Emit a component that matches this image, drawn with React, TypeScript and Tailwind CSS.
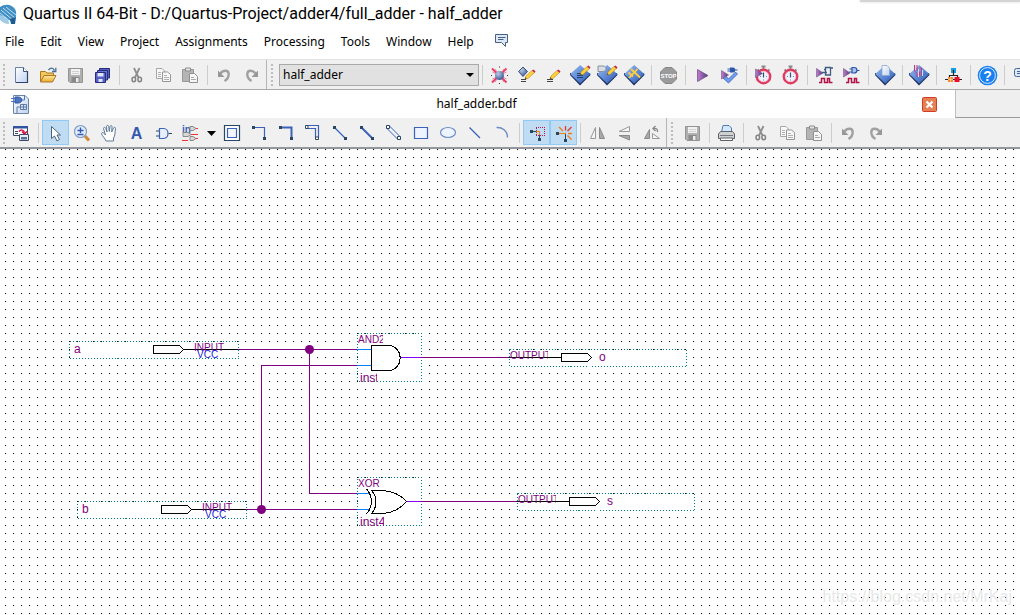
import type { ReactNode } from "react";

const NAVY = "#2a4762";
const BLUE = "#3b62b8";

function Svg({ children }: { children: ReactNode }) {
  return (
    <svg width="21" height="21" viewBox="0 0 21 21" className="block shrink-0" fill="none" aria-hidden="true">
      {children}
    </svg>
  );
}

function Defs() {
  return (
    <svg width="0" height="0" className="absolute" aria-hidden="true">
      <defs>
        <linearGradient id="chip" x1="0" y1="0" x2="1" y2="1">
          <stop offset="0" stopColor="#9dbdf0" />
          <stop offset="0.5" stopColor="#5f8bd8" />
          <stop offset="1" stopColor="#2c56ad" />
        </linearGradient>
        <linearGradient id="paper" x1="0" y1="0" x2="1" y2="1">
          <stop offset="0" stopColor="#ffffff" />
          <stop offset="1" stopColor="#bfd3f2" />
        </linearGradient>
        <linearGradient id="play" x1="0" y1="0" x2="1" y2="0">
          <stop offset="0" stopColor="#c77bd0" />
          <stop offset="1" stopColor="#4a3a78" />
        </linearGradient>
        <radialGradient id="ball" cx="0.35" cy="0.3" r="0.8">
          <stop offset="0" stopColor="#b9cbe6" />
          <stop offset="1" stopColor="#31508f" />
        </radialGradient>
        <linearGradient id="folder" x1="0" y1="0" x2="0" y2="1">
          <stop offset="0" stopColor="#ffe9a0" />
          <stop offset="1" stopColor="#e9a92c" />
        </linearGradient>
      </defs>
    </svg>
  );
}

function Chip() {
  return (
    <>
      <path d="M0 10 L10 20.500 L20.500 10 L20 8 L0 8z" fill="#1c3263" />
      <path d="M10.200 0 L20.300 9 L10.200 18.500 L0.200 9z" fill="url(#chip)" />
    </>
  );
}

function Pencil({ x = 0, y = 0 }: { x?: number; y?: number }) {
  return (
    <g transform={`translate(${x} ${y})`}>
      <path d="M0 9 L1 6 L7 0.500 L9.500 2.500 L3 8.500z" fill="#ffd23a" stroke="#b98518" strokeWidth="0.6" />
      <path d="M7 0.500 L8.500 -0.500 L10.500 1.500 L9.500 2.700z" fill="#c22050" />
      <path d="M0 9 L0.600 7.200 L1.800 8.400z" fill="#333" />
    </g>
  );
}

function Clock() {
  return (
    <>
      <path d="M8.500 1.500 H12.500 M10.500 2 V5 M15 4.500 L16.500 6 M6 4.500 L4.500 6" stroke="#888" strokeWidth="1.8" />
      <circle cx="10.500" cy="11.500" r="6.700" fill="#eef3ff" stroke="#de3a60" strokeWidth="2.4" />
      <circle cx="10.500" cy="11.500" r="5.200" stroke="#f7b8c6" strokeWidth="0.8" />
      <path d="M10.500 7.500 V12.500" stroke="#3a5070" strokeWidth="1.2" />
      <path d="M7 11.500 H8 M13 11.500 H14 M10 15 H11" stroke="#7088b0" />
    </>
  );
}

const newIcon = (
  <Svg>
    <path d="M4.500 2.500 H12.500 L16.500 6.500 V17.500 H4.500z" fill="url(#paper)" stroke="#6c84a8" />
    <path d="M16.500 6 V17.500 H5" stroke="#2e4468" strokeWidth="1.2" />
    <path d="M12.500 2.500 V6.500 H16.500" fill="#fff" stroke="#3f567c" />
  </Svg>
);
const openIcon = (
  <Svg>
    <path d="M2.500 16.500 V6.500 H7.500 L9 8 H15.500 V11" fill="#f3c65a" stroke="#a9792a" />
    <path d="M2.500 17 L6 10.500 H18 L14.500 17z" fill="url(#folder)" stroke="#a9792a" />
    <path d="M10.500 5 C12.500 2.500 15 2.500 16.500 5.500 M17.800 2.800 V6.500 H14" stroke="#4a7098" strokeWidth="1.300" />
  </Svg>
);
const saveIcon = (
  <Svg>
    <path d="M3.500 3.500 H17.500 V17.500 H5 L3.500 16z" fill="#b0b0b0" stroke="#939393" />
    <path d="M6 4 H15 V10 H6z" fill="#f2f2f2" />
    <path d="M7 6.500 H14 M7 8.500 H14" stroke="#d0d0d0" />
    <path d="M6.500 12 H14.500 V17 H6.500z" fill="#8a8a8a" />
    <path d="M11 13 H13.500 V17 H11z" fill="#ededed" />
  </Svg>
);
const saveAllIcon = (
  <Svg>
    <path d="M7.500 3.500 H17.500 V13 H7.500z" fill="#5560c4" stroke="#262c78" />
    <path d="M5.500 5.500 H15.500 V15 H5.500z" fill="#6a76d6" stroke="#262c78" />
    <path d="M3.500 7.500 H13.500 V17.500 H3.500z" fill="#5560c4" stroke="#262c78" />
    <path d="M5.500 8 H11.500 V11.500 H5.500z M6.500 14 H10.500 V17 H6.500z" fill="#dfe4ff" />
  </Svg>
);
const cutIcon = (
  <Svg>
    <path d="M8 3 L12.500 12.500 M13.500 3 L9 12.500" stroke="#8f8f8f" strokeWidth="1.800" />
    <ellipse cx="7.800" cy="14.500" rx="1.800" ry="2.200" stroke="#848484" strokeWidth="1.500" />
    <ellipse cx="13.700" cy="14.500" rx="1.800" ry="2.200" stroke="#848484" strokeWidth="1.500" />
  </Svg>
);
const copyIcon = (
  <Svg>
    <path d="M3.500 3.500 H9 L11.500 6 V13.500 H3.500z" fill="#f8f8f8" stroke="#a6a6a6" />
    <path d="M9.500 7 H14.500 L17.500 9.500 V16.500 H9.500z" fill="#f8f8f8" stroke="#969696" />
    <path d="M5 7.500 H8 M5 9.500 H8 M5 11.500 H8 M11 10.500 H14 M11 12.500 H16 M11 14.500 H16" stroke="#b0b0b0" />
  </Svg>
);
const pasteIcon = (
  <Svg>
    <path d="M2.500 4.500 H13.500 V16.500 H2.500z" fill="#b4b4b4" stroke="#989898" />
    <path d="M5.500 3 H10.500 V6 H5.500z" fill="#e4e4e4" stroke="#8c8c8c" />
    <path d="M9.500 8.500 H14.500 L17.500 11.500 V17.500 H9.500z" fill="#f6f6f6" stroke="#909090" />
    <path d="M11 12.500 H14 M11 14.500 H16" stroke="#aaa" />
  </Svg>
);
const undoIcon = (
  <Svg>
    <path d="M6.500 8.500 C9 5 14.500 4.500 14.700 9 C14.800 12 13 14.500 10.500 16" stroke="#a0a0a0" strokeWidth="2.400" />
    <path d="M4 5.500 V12 H10.500z" fill="#989898" />
  </Svg>
);
const redoIcon = (
  <Svg>
    <path d="M14.500 8.500 C12 5 6.500 4.500 6.300 9 C6.200 12 8 14.500 10.500 16" stroke="#a0a0a0" strokeWidth="2.400" />
    <path d="M17 5.500 V12 H10.500z" fill="#989898" />
  </Svg>
);
const settingsIcon = (
  <Svg>
    <path d="M3 3.500 L17.500 17.500 M17.500 3.500 L3 17.500" stroke="#ec3a66" strokeWidth="1.800" />
    <path d="M6 4 L15 17 M15 4 L6 17 M3.500 7 L17.500 14 M17.500 7 L3.500 14" stroke="#f0668a" strokeWidth="0.800" />
    <path d="M10 2 H11 M10 18.500 H11 M2 10.500 H3 M18 10.500 H19" stroke="#333" />
    <circle cx="10.500" cy="10.500" r="4.500" fill="url(#ball)" />
  </Svg>
);
const assignIcon = (
  <Svg>
    <path d="M7 2 L11.500 6.500 L7 11.500 L2.500 6.500z" fill="url(#ball)" stroke="#3b5480" />
    <Pencil x={9} y={5} />
    <path d="M5 14.500 H10 M5 16.500 H10" stroke="#444" />
  </Svg>
);
const editAssignIcon = (
  <Svg>
    <Pencil x={7} y={5} />
    <path d="M4 14.500 H10 M4 16.500 H10" stroke="#444" />
  </Svg>
);
const chipEditIcon = (
  <Svg>
    <Chip />
    <path d="M7 8.500 H13 M7 10.500 H13 M7 12.500 H13" stroke="#24406e" />
    <Pencil x={10} y={1} />
  </Svg>
);
const chipPinIcon = (
  <Svg>
    <Chip />
    <path d="M1 1 H6 C10 1 10 6.500 6 6.500 H1z" fill="#d8dce4" stroke="#8a919c" />
    <Pencil x={10} y={1} />
  </Svg>
);
const chipPlanIcon = (
  <Svg>
    <Chip />
    <path d="M7 4 L16 12.500 M13.500 4 L5 13 M4.500 7.500 L9 11.500" stroke="#ffcf3c" strokeWidth="1.800" />
  </Svg>
);
const stopIcon = (
  <Svg>
    <path d="M7 2.500 H14 L18.500 7 V14 L14 18.500 H7 L2.500 14 V7z" fill="#9b9b9b" stroke="#878787" />
    <text x="10.500" y="13" textAnchor="middle" fontSize="6" fontWeight="700" fontFamily="Liberation Sans, sans-serif" fill="#fff">
      STOP
    </text>
  </Svg>
);
const playIcon = (
  <Svg>
    <path d="M5.500 4.500 L16 10.500 L5.500 16.500z" fill="url(#play)" stroke="#6e5685" strokeWidth="0.800" />
  </Svg>
);
const analyzeIcon = (
  <Svg>
    <path d="M4 13 L7 11 L9.500 14 L16.500 7 L18.500 9 L9.500 18z" fill="#6f9df0" stroke="#3b62b8" strokeWidth="0.800" />
    <path d="M2.500 5.500 L9.500 10 L2.500 14z" fill="url(#play)" stroke="#6e5685" strokeWidth="0.600" />
    <path d="M11 2.500 H14 C17 2.500 17 7.500 14 7.500 H11z" fill="#2d57ae" />
    <path d="M8.500 4 H11 M8.500 6 H11 M16 5 H18.500" stroke="#2d57ae" />
  </Svg>
);
const timingRunIcon = (
  <Svg>
    <Clock />
    <path d="M2.500 4 L9.500 8.500 L2.500 12.500z" fill="url(#play)" stroke="#6e5685" strokeWidth="0.600" />
  </Svg>
);
const timingIcon = (
  <Svg>
    <Clock />
  </Svg>
);
const wave = "M5 17.500 H7.500 V13.500 H10.500 V17.500 H13.500 V13.500 H15.500 V17.500 H18.500";
const rtlSimIcon = (
  <Svg>
    <path d="M2.500 3.500 L9 8 L2.500 12z" fill="url(#play)" stroke="#6e5685" strokeWidth="0.600" />
    <path d="M11.500 2.500 H16.500 V10 H11.500z M8 7.500 H13 M10 4.500 H11.500 M16.500 3 H19" fill="none" stroke="#3f5d84" strokeWidth="1.300" />
    <path d={wave} stroke="#b01246" strokeWidth="1.500" />
  </Svg>
);
const gateSimIcon = (
  <Svg>
    <path d="M2.500 3.500 L9 8 L2.500 12z" fill="url(#play)" stroke="#6e5685" strokeWidth="0.600" />
    <path d="M11 2.500 H13 C17 2.500 17 8 13 8 H11z" fill="#a9c4f2" stroke="#2e55a8" strokeWidth="1.200" />
    <path d="M8.500 4 H11 M8 7 H11 M16 5.500 H18.500" stroke="#2e55a8" />
    <path d={wave} stroke="#b01246" strokeWidth="1.500" />
  </Svg>
);
const compileReportIcon = (
  <Svg>
    <Chip />
    <path d="M7 0.500 H12 L14.500 3 V10.500 H7z" fill="url(#paper)" stroke="#8fa5cc" strokeWidth="0.800" />
  </Svg>
);
const programmerIcon = (
  <Svg>
    <Chip />
    <path d="M5.500 0 V6 L8 8.500 V12 M8 0 V5 L10.500 7 V11 M10.500 3 H12.500 V11" stroke="#c23b7a" />
    <path d="M6.500 0 V5 M9.500 4 V12 M13.500 5 V11" stroke="#d6def5" />
  </Svg>
);
const qsysIcon = (
  <Svg>
    <path d="M8 3 H13 V8 H8z" fill="#14a0e8" />
    <path d="M10.500 5 V10.500 M6.500 13 V10.500 H14.500 V13 M2 14.500 H19" stroke="#222" strokeWidth="1.200" />
    <path d="M5 12 H10 V17 H5z" fill="#f58a2c" />
    <path d="M11.500 12 H16.500 V17 H11.500z" fill="#e8102c" />
    <path d="M7.500 12 V17 M5 14.500 H10" stroke="#ffd9a8" strokeWidth="0.700" />
  </Svg>
);
const helpIcon = (
  <Svg>
    <circle cx="10.500" cy="10.500" r="9.800" fill="#1a80f0" />
    <circle cx="10.500" cy="10.500" r="7.900" stroke="#d8eaff" />
    <text x="10.500" y="15.500" textAnchor="middle" fontSize="14" fontWeight="700" fontFamily="Liberation Sans, sans-serif" fill="#fff">
      ?
    </text>
  </Svg>
);
const messagesIcon = (
  <Svg>
    <rect x="3.500" y="3.500" width="15" height="8" rx="2" fill="#dce8fa" stroke="#4a6590" />
    <path d="M6 6.500 H16 M6 8.500 H16" stroke="#4a6590" />
  </Svg>
);

const detachIcon = (
  <Svg>
    <path d="M2.500 3.500 H16.500 V12.500 H2.500z" fill="#fff" stroke="#3a4a68" />
    <path d="M2 3 H17 V5.500 H2z" fill="#3154a0" />
    <path d="M4 8.500 H7 M4 10.500 H7" stroke="#3a4a68" />
    <path d="M8.500 11.500 H17.500 V17.500 H8.500z" fill="#e8eef8" stroke="#3a4a68" />
    <path d="M10 14 H16 V16.500 H10z" fill="#56709a" />
    <path d="M8 8.500 C9.500 6.500 13 6.500 13.500 9.500 M11 8.500 L13.500 11 L16 8.500" stroke="#d01246" strokeWidth="1.500" />
  </Svg>
);
const pointerIcon = (
  <Svg>
    <path d="M6.500 3.500 V15.500 L9.500 13 L12 18 L14.500 16.500 L12 12 H15.500z" fill="#fff" stroke="#4a6283" />
  </Svg>
);
const zoomIcon = (
  <Svg>
    <path d="M13 13 L17 17.500" stroke="#d28a3c" strokeWidth="3.200" />
    <circle cx="8.500" cy="8.500" r="6" fill="#e3eefc" stroke="#7f9cc4" strokeWidth="1.200" />
    <path d="M8.500 4.500 V10 M5.500 7.500 H11.500 M5.500 11.500 H11.500" stroke="#2c58b8" strokeWidth="1.400" />
  </Svg>
);
const handIcon = (
  <Svg>
    <path
      d="M7 18 C6 15 3 13 2.500 10.500 C3 9 5 9.500 6.500 12 L4.500 5.500 C4.500 4 6.300 4 6.800 5.500 L8 9 L7.500 3.500 C7.700 2 9.500 2 9.700 3.500 L10.300 8.500 L11 3.500 C11.500 2 13 2.300 13 3.800 L12.700 9 L14.500 5 C15.200 3.700 16.800 4.300 16.500 5.700 C15.700 9 16.500 13 14.500 15 V18z"
      fill="#fff"
      stroke="#5c7898"
    />
  </Svg>
);
const gateIcon = (
  <Svg>
    <path d="M6.500 5.500 H10.500 C16.500 5.500 16.500 15.500 10.500 15.500 H6.500z" fill="#e8f0ff" stroke={BLUE} strokeWidth="1.200" />
    <path d="M3 8 H6 M3 13 H6 M15.500 10.500 H19" stroke={NAVY} />
  </Svg>
);
const pinIcon = (
  <Svg>
    <text x="2" y="10" fontSize="10" fontWeight="700" fontFamily="Liberation Sans, sans-serif" fill="#3b62b8">
      in
    </text>
    <path d="M10 3.500 H13 L16 5.500 L13 7.500 H10z" fill="#d8d8d8" stroke="#8a8a8a" />
    <path d="M3 9.500 H8 L11 11.500 L8 13.500 H3z M10 13.500 H13 L16 15.500 L13 17.500 H10z" fill="#d8d8d8" stroke="#8a8a8a" />
    <path d="M16 5.500 H18 M11 11.500 H18 M16 15.500 H18 M2 17.500 H8" stroke="#e33" />
  </Svg>
);
const blockIcon = (
  <Svg>
    <path d="M2.500 2.500 H17.500 V17.500 H2.500z" fill="#fff" stroke={NAVY} strokeWidth="1.200" />
    <path d="M5.500 5.500 H14.500 V14.500 H5.500z" fill="#f2f6ff" stroke={BLUE} strokeWidth="1.200" />
  </Svg>
);
const nodeIcon = (
  <Svg>
    <path d="M4.500 4.500 H15.500 V15.500" stroke={BLUE} strokeWidth="1.200" />
    <path d="M3 3 H6 V6 H3z M14 14 H17 V17 H14z" fill={NAVY} />
  </Svg>
);
const busIcon = (
  <Svg>
    <path d="M4.500 4.500 H15.500 V15.500" stroke={BLUE} strokeWidth="2" />
    <path d="M3 3 H6 V6 H3z M14 14 H17 V17 H14z" fill={NAVY} />
  </Svg>
);
const conduitIcon = (
  <Svg>
    <path d="M5 2.500 H15.500 V14 M5 5.500 H12.500 V14" stroke={BLUE} strokeWidth="1.200" />
    <path d="M2.500 2.500 H5 V5.500 H2.500z M12.500 14 H15.500 V16.500 H12.500z" fill="#fff" stroke={NAVY} />
  </Svg>
);
const diagNodeIcon = (
  <Svg>
    <path d="M4.500 4.500 L15.500 15.500" stroke={BLUE} strokeWidth="1.200" />
    <path d="M3 3 H6 V6 H3z M14 14 H17 V17 H14z" fill={NAVY} />
  </Svg>
);
const diagBusIcon = (
  <Svg>
    <path d="M4.500 4.500 L15.500 15.500" stroke={BLUE} strokeWidth="2" />
    <path d="M3 3 H6 V6 H3z M14 14 H17 V17 H14z" fill={NAVY} />
  </Svg>
);
const diagConduitIcon = (
  <Svg>
    <path d="M5.500 3 L16 13.500 M3 5.500 L13.500 16" stroke={BLUE} />
    <path d="M2.500 2.500 H5.500 V5.500 H2.500z M13.500 13.500 H16.500 V16.500 H13.500z" fill="#fff" stroke={NAVY} />
  </Svg>
);
const rectIcon = (
  <Svg>
    <path d="M3.500 4.500 H16.500 V15.500 H3.500z" fill="#edf3ff" stroke={BLUE} strokeWidth="1.200" />
  </Svg>
);
const ellipseIcon = (
  <Svg>
    <ellipse cx="10" cy="9.500" rx="7.500" ry="5" fill="#edf3ff" stroke="#6b8ac6" strokeWidth="1.200" />
  </Svg>
);
const lineIcon = (
  <Svg>
    <path d="M4.500 4.500 L15 15" stroke={BLUE} strokeWidth="1.200" />
  </Svg>
);
const arcIcon = (
  <Svg>
    <path d="M4.500 4.500 C10 4 15.500 7.500 15.500 14.500" stroke="#6b8ac6" strokeWidth="1.400" />
  </Svg>
);
const rubberIcon = (
  <Svg>
    <path d="M10 4.500 H18.500 V12.500 H10 V4.500" stroke="#b01860" strokeDasharray="1 1" shapeRendering="crispEdges" />
    <path d="M7 8.500 H10" stroke={NAVY} />
    <path d="M10 8.500 H13.500 V12" stroke="#e68a1e" strokeWidth="1.200" />
    <path d="M13.500 12 V15" stroke={NAVY} />
    <path d="M4 7 H7 V10 H4z M12 15 H15 V18 H12z" fill={NAVY} />
  </Svg>
);
const partialIcon = (
  <Svg>
    <path d="M12.500 11 V17" stroke={NAVY} />
    <path d="M6 10.500 H13" stroke="#e68a1e" strokeWidth="1.200" />
    <path d="M3 9 H6 V12 H3z M11 16 H14 V19 H11z" fill={NAVY} />
    <path d="M6 4 L10 8 M14.500 12.500 L18.500 16.500 M15 10.500 H19" stroke="#ee7d18" strokeWidth="1.400" />
    <path d="M12.500 3 V7.500 M18.500 4 L14.500 8" stroke="#e03a2a" strokeWidth="1.300" />
  </Svg>
);
const flipHIcon = (
  <Svg>
    <path d="M8.500 4.500 V15.500 H3.500z" fill="#f6f6f6" stroke="#999" />
    <path d="M12.500 4.500 V15.500 H17.500z" fill="#a9a9a9" stroke="#8a8a8a" />
  </Svg>
);
const flipVIcon = (
  <Svg>
    <path d="M5 8.500 H15.500 V3.500z" fill="#f6f6f6" stroke="#999" />
    <path d="M5 12.500 H15.500 V17z" fill="#a9a9a9" stroke="#8a8a8a" />
  </Svg>
);
const rotateIcon = (
  <Svg>
    <path d="M8.500 6.500 V15.500 H3.500z" fill="#a9a9a9" stroke="#8a8a8a" />
    <path d="M11.500 10.500 V15.500 H18.500z" fill="#f6f6f6" stroke="#999" />
    <path d="M16.500 9 C17 6 15 5 12.500 5.500 M14.500 3 L12 5.500 L14.500 8" stroke="#888" strokeWidth="1.400" />
  </Svg>
);
const printIcon = (
  <Svg>
    <path d="M5.500 9 L7 2.500 H13 L15.500 5 V9" fill="#d4e8ff" stroke="#4e7fb0" />
    <path d="M4.500 8.500 H16.500 L18.500 11 V15.500 H2.500 V11z" fill="#cfd0d2" stroke="#5e6166" />
    <path d="M4.500 15 H16.500 V17.500 H4.500z" fill="#fff" stroke="#5e6166" />
    <path d="M4 12.500 H17" stroke="#75797f" />
  </Svg>
);

type Item = [label: string, icon: ReactNode, active?: boolean] | "|";

const fileTools: Item[] = [
  ["New", newIcon],
  ["Open", openIcon],
  ["Save", saveIcon],
  ["Save All", saveAllIcon],
  "|",
  ["Cut", cutIcon],
  ["Copy", copyIcon],
  ["Paste", pasteIcon],
  "|",
  ["Undo", undoIcon],
  ["Redo", redoIcon],
];

const projectTools: Item[] = [
  "|",
  ["Settings", settingsIcon],
  ["Assignment Editor", assignIcon],
  ["Edit Assignments", editAssignIcon],
  ["Pin Planner", chipEditIcon],
  ["Design Partition Planner", chipPinIcon],
  ["Chip Planner", chipPlanIcon],
  "|",
  ["Stop Processing", stopIcon],
  "|",
  ["Start Compilation", playIcon],
  ["Start Analysis & Synthesis", analyzeIcon],
  "|",
  ["Start TimeQuest", timingRunIcon],
  ["TimeQuest Timing Analyzer", timingIcon],
  "|",
  ["RTL Simulation", rtlSimIcon],
  ["Gate Level Simulation", gateSimIcon],
  "|",
  ["Compilation Report", compileReportIcon],
  "|",
  ["Programmer", programmerIcon],
  "|",
  ["Qsys", qsysIcon],
  "|",
  ["Help", helpIcon],
  "|",
  ["Messages", messagesIcon],
];

const drawTools: Item[] = [
  ["Rectangle Block", blockIcon],
  ["Orthogonal Node", nodeIcon],
  ["Orthogonal Bus", busIcon],
  ["Orthogonal Conduit", conduitIcon],
  ["Diagonal Node", diagNodeIcon],
  ["Diagonal Bus", diagBusIcon],
  ["Diagonal Conduit", diagConduitIcon],
  ["Rectangle", rectIcon],
  ["Oval", ellipseIcon],
  ["Line", lineIcon],
  ["Arc", arcIcon],
  "|",
  ["Rubberbanding", rubberIcon, true],
  ["Partial Line Selection", partialIcon, true],
  "|",
  ["Flip Horizontal", flipHIcon],
  ["Flip Vertical", flipVIcon],
  ["Rotate Left 90", rotateIcon],
];

const selectTools: Item[] = [
  ["Detach Window", detachIcon],
  "|",
  ["Selection Tool", pointerIcon, true],
  ["Zoom Tool", zoomIcon],
  ["Hand Tool", handIcon],
  ["Text Tool", <span className="font-['Liberation_Sans',sans-serif] text-base font-bold text-[#3358b0]">A</span>],
  ["Symbol Tool", gateIcon],
  ["Pin Tool", pinIcon],
];

const editTools: Item[] = [
  ["Save", saveIcon],
  "|",
  ["Print", printIcon],
  "|",
  ["Cut", cutIcon],
  ["Copy", copyIcon],
  ["Paste", pasteIcon],
  "|",
  ["Undo", undoIcon],
  ["Redo", redoIcon],
];

function Tools({ items }: { items: Item[] }) {
  return (
    <div className="flex shrink-0 items-center">
      {items.map((item, i) =>
        item === "|" ? (
          <span key={i} className="flex w-[7px] shrink-0 justify-center">
            <span className="h-5 w-px bg-[#cdcdcd]" />
          </span>
        ) : (
          <button
            key={i}
            type="button"
            aria-label={item[0]}
            className={
              item[2]
                ? "flex h-[25px] w-[27px] shrink-0 items-center justify-center border border-[#90c8f6] bg-[#c0dcf3] pt-0.5"
                : "flex h-[25px] w-[27px] shrink-0 items-center justify-center pt-0.5"
            }
          >
            {item[1]}
          </button>
        )
      )}
    </div>
  );
}

function Grip() {
  return <span className="mx-[3px] h-[22px] w-0 shrink-0 border-l-2 border-dotted border-[#bdbdbd]" />;
}

const menus = ["File", "Edit", "View", "Project", "Assignments", "Processing", "Tools", "Window", "Help"];

function Frame({ w, h }: { w: number; h: number }) {
  return <rect x="0.5" y="0.5" width={w} height={h} fill="#fff" stroke="#008080" strokeDasharray="1 2" />;
}

const PLUM = "#800080";

function InputPin({ x, y, name }: { x: number; y: number; name: string }) {
  return (
    <g transform={`translate(${x} ${y})`}>
      <Frame w={169} h={17} />
      <path d="M84.500 4.500 H110.500 L114.500 8.500 L110.500 12.500 H84.500z M114 8.500 H169" fill="none" stroke="#000" />
      <text x="5" y="12" fontSize="12" fill={PLUM}>{name}</text>
      <text x="125" y="10" fontSize="10" fill={PLUM}>INPUT</text>
      <text x="128" y="17" fontSize="10" fill="#2020e0">VCC</text>
    </g>
  );
}

function OutputPin({ x, y, name }: { x: number; y: number; name: string }) {
  return (
    <g transform={`translate(${x} ${y})`}>
      <Frame w={177} h={17} />
      <path d="M0 8.500 H52 M52.500 4.500 H78.500 L82.500 8.500 L78.500 12.500 H52.500z" fill="none" stroke="#000" />
      <svg x="1" y="0" width="38" height="14">
        <text x="0" y="10" fontSize="10" fill={PLUM}>OUTPUT</text>
      </svg>
      <text x="90" y="12" fontSize="12" fill={PLUM}>{name}</text>
    </g>
  );
}

function Gate({ x, y, type, name, clip, children }: { x: number; y: number; type: string; name: string; clip: number; children: ReactNode }) {
  return (
    <g transform={`translate(${x} ${y})`}>
      <Frame w={64} h={48} />
      {children}
      <svg x="1" y="0" width="25" height="14">
        <text x="0" y="10" fontSize="10" fill={PLUM}>{type}</text>
      </svg>
      <svg x="3" y="37" width={clip} height="14">
        <text x="0" y="12" fontSize="12" fill={PLUM}>{name}</text>
      </svg>
    </g>
  );
}

function Schematic() {
  return (
    <svg className="absolute inset-0 h-full w-full font-['Liberation_Sans',sans-serif]" role="img" aria-label="half_adder schematic">
      <defs>
        <pattern id="grid" width="8" height="8" patternUnits="userSpaceOnUse">
          <rect x="5" y="0" width="1" height="1" fill="#000" />
        </pattern>
      </defs>
      <rect width="100%" height="100%" fill="url(#grid)" shapeRendering="crispEdges" />

      <g shapeRendering="crispEdges">
        <InputPin x={69} y={192} name="a" />
        <InputPin x={77} y={352} name="b" />
        <OutputPin x={509} y={200} name="o" />
        <OutputPin x={517} y={344} name="s" />
        <Gate x={357} y={184} type="AND2" name="inst" clip={17}>
          <path d="M0 16.500 H14 M0 32.500 H14" stroke="#0080ff" />
          <path d="M43 24.500 H64" stroke="#8000ff" />
          <path d="M14.500 12.500 H31.500 C47 13 47 37 31.500 37.500 H14.500z" fill="none" stroke="#000" />
        </Gate>
        <Gate x={357} y={328} type="XOR" name="inst4" clip={24}>
          <path d="M0 16.500 H13 M0 32.500 H13" stroke="#0080ff" />
          <path d="M49 24.500 H64" stroke="#8000ff" />
          <path
            d="M9.500 12 C16 19 16 30 9.500 37 M14.500 13.500 H25 C36 14 43 17 49.500 24.500 C43 32 36 36 25 36.500 H14.500 C20.500 30 20.500 20 14.500 13.500"
            fill="none"
            stroke="#000"
          />
        </Gate>
        <g fill="none" stroke={PLUM}>
          <path d="M238 200.500 H357" />
          <path d="M309.500 200 V344.500 H357" />
          <path d="M246 360.500 H357" />
          <path d="M261.500 360 V216.500 H357" />
          <path d="M421 208.500 H509" />
          <path d="M421 352.500 H517" />
        </g>
      </g>
      <circle cx="309.500" cy="200.500" r="4.500" fill={PLUM} />
      <circle cx="261.500" cy="360.500" r="4.500" fill={PLUM} />
    </svg>
  );
}

export default function App() {
  return (
    <div className="relative flex min-h-screen w-full flex-col overflow-hidden bg-white font-['Noto_Sans',sans-serif] text-black">
      <Defs />
      <div className="absolute top-0 right-0 h-[2px] w-40 bg-[#d4d4d4] shadow-[0_0_3px_#d4d4d4]" />

      <header className="flex h-[30px] shrink-0 items-center gap-1 pb-0.5">
        <svg width="19" height="21" viewBox="0 0 19 21" aria-hidden="true" className="shrink-0">
          <path d="M0 3 C6 -1 13 1 15.500 6 C17 10 16 15 13 18 L9 16 L6 18 L0 14z" fill="#3f8fc4" />
          <path d="M0 11 C5 12 9 15 9 20 C5 20 2 18 0 16z" fill="#9fcbe6" />
          <path d="M1 6 L14 17 M3 4 L15 14 M6 3 L16 11 M0 9 L11 18" stroke="#e3f2fb" strokeWidth="0.800" />
          <path d="M10 15 L16 13 L15 20 H11z" fill="#1c5c94" />
        </svg>
        <h1 className="font-['Roboto',sans-serif] text-base leading-5 whitespace-nowrap">
          Quartus II 64-Bit - D:/Quartus-Project/adder4/full_adder - half_adder
        </h1>
      </header>

      <nav className="flex h-[29px] shrink-0 items-start gap-4 pt-1 pl-[5px] text-xs leading-4">
        {menus.map((m) => (
          <button key={m} type="button">
            {m}
          </button>
        ))}
        <button type="button" aria-label="Feedback" className="ml-1">
          <svg width="16" height="14" viewBox="0 0 16 14" fill="none" aria-hidden="true">
            <path d="M1.500 0.500 H13.500 V8.500 H11.500 V12.500 L7.500 8.500 H1.500z" fill="#dbe8f8" stroke="#48617f" />
            <path d="M4 3.500 H11.500 M4 5.500 H9.500" stroke="#48617f" />
          </svg>
        </button>
      </nav>

      <div className="flex h-[31px] shrink-0 items-center overflow-hidden border-t border-b border-t-[#e3e3e3] border-b-[#a9a9a9] bg-[#f0f0f0]">
        <Grip />
        <Tools items={fileTools} />
        <span className="ml-px h-full w-px shrink-0 bg-[#b5b5b5]" />
        <span className="ml-px flex shrink-0 items-center">
          <Grip />
        </span>
        <div className="relative ml-[3px] shrink-0">
          <select
            aria-label="Current revision"
            className="block h-[22px] w-[200px] appearance-none rounded-none border border-[#a9a9a9] bg-[#e1e1e1] pl-[3px] text-xs leading-4"
          >
            <option>half_adder</option>
          </select>
          <svg width="8" height="4" viewBox="0 0 8 4" className="pointer-events-none absolute top-[9px] right-[5px]" aria-hidden="true">
            <path d="M0 0 H8 L4 4z" fill="#000" />
          </svg>
        </div>
        <Tools items={projectTools} />
      </div>

      <div className="flex h-7 shrink-0">
        <div className="flex flex-1 items-center bg-white">
          <svg width="20" height="22" viewBox="0 0 20 22" fill="none" className="ml-[11px] shrink-0" aria-hidden="true">
            <path d="M2.500 2.500 H14 L17.500 6 V20.500 H2.500z" fill="url(#paper)" stroke="#6c84a8" />
            <path d="M4 4 H7 C12 4 12 10 7 10 H4z" fill="#4a76c2" stroke="#2e55a0" />
            <path d="M0 5.500 H4 M0 8.500 H4 M11 7 H13.500 V2" stroke="#4a76c2" />
            <path d="M9.500 11.500 H15.500 V16.500 H9.500z M12.500 11.500 V16.500 M9.500 14 H15.500 M6 20 V14 H9" stroke="#5f7ba6" />
          </svg>
          <span className="flex-1 text-center text-xs leading-4">half_adder.bdf</span>
          <button type="button" aria-label="Close" className="mr-[18px]">
            <svg width="15" height="15" viewBox="0 0 15 15" aria-hidden="true">
              <rect x="0.5" y="0.5" width="14" height="14" rx="1" fill="#e58055" stroke="#d23c24" />
              <path d="M4.500 4.500 L10.500 10.500 M10.500 4.500 L4.500 10.500" stroke="#fff" strokeWidth="2.200" />
            </svg>
          </button>
        </div>
        <div className="w-[65px] border-b border-l border-b-[#9a9a9a] border-l-[#c0c0c0] bg-[#efefef]" />
      </div>

      <div className="flex h-[31px] shrink-0 items-center overflow-hidden border-b-2 border-[#94979d] bg-[#f0f0f0]">
        <Grip />
        <Tools items={selectTools} />
        <button type="button" aria-label="More pins" className="flex h-[25px] w-[15px] shrink-0 items-center justify-center pt-0.5">
          <svg width="9" height="5" viewBox="0 0 9 5" aria-hidden="true">
            <path d="M0 0 H9 L4.500 5z" fill="#000" />
          </svg>
        </button>
        <Tools items={drawTools} />
        <span className="ml-px h-full w-px shrink-0 bg-[#b5b5b5]" />
        <span className="ml-px flex shrink-0 items-center">
          <Grip />
        </span>
        <span className="ml-[3px] flex">
          <Tools items={editTools} />
        </span>
      </div>

      <main className="relative min-h-[400px] flex-1 overflow-hidden bg-white">
        <Schematic />
        <span className="absolute right-2 bottom-2 font-['Liberation_Sans',sans-serif] text-base leading-5 text-[#e8e8e8]">
          https://blog.csdn.net/MrKaj
        </span>
      </main>
    </div>
  );
}
